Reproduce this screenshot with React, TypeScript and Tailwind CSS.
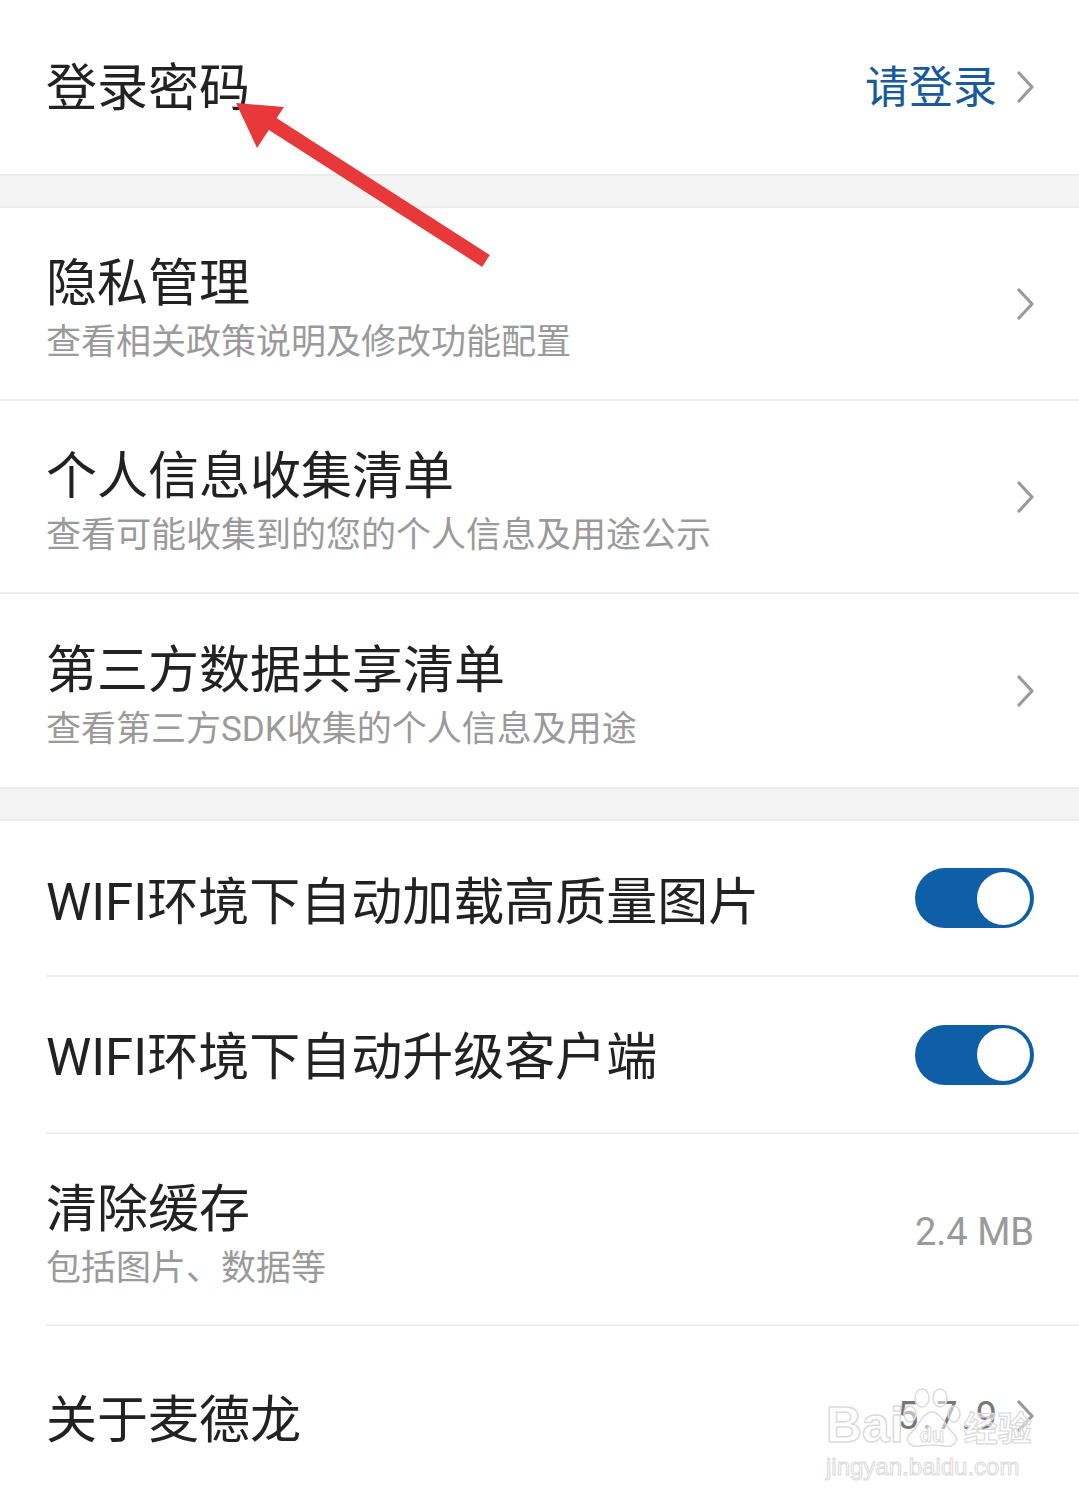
import React from "react";

const font = { fontFamily: 'Roboto, "Noto Sans CJK SC", "Noto Sans", sans-serif' };

function Chevron() {
  return (
    <svg width="18" height="32" viewBox="0 0 18 32" className="shrink-0">
      <path d="M2 2 L15 16 L2 30" fill="none" stroke="#9a9a9a" strokeWidth="3.2" strokeLinecap="round" strokeLinejoin="round" />
    </svg>
  );
}

function Toggle() {
  return (
    <div className="w-[119px] h-[60px] rounded-full bg-[#0e5ea8] flex items-center justify-end pr-[4px]">
      <div className="w-[53px] h-[53px] rounded-full bg-white" />
    </div>
  );
}

function Band() {
  return <div className="h-[34px] bg-[#f4f4f4] border-t-2 border-b-2 border-[#ececec]" />;
}

function TwoLineRow({ title, sub, last }: { title: string; sub: string; last?: boolean }) {
  return (
    <div className={`h-[193px] flex items-center justify-between pl-[46px] pr-[44px] ${last ? "" : "border-b-2 border-[#efefef]"}`}>
      <div className="flex flex-col mt-[12px]">
        <div className="text-[51px] leading-[60px] text-[#222]">{title}</div>
        <div className="text-[35px] leading-[44px] mt-[7px] text-[#9a9a9a]">{sub}</div>
      </div>
      <Chevron />
    </div>
  );
}

function Watermark() {
  return (
    <div className="absolute left-[826px] top-[1394px] pointer-events-none flex flex-col items-start">
      <div className="flex items-end h-[56px]">
        <span className="text-[50px] leading-[50px] text-white/50 [-webkit-text-stroke:1.5px_#dadada] font-bold" style={{ fontFamily: '"Liberation Sans", sans-serif' }}>Bai</span>
        <svg width="64" height="62" viewBox="0 0 64 62" className="-ml-[2px]">
          <g fill="rgba(255,255,255,0.5)" stroke="#dadada" strokeWidth="1.5">
            <ellipse cx="20" cy="10" rx="7" ry="9" />
            <ellipse cx="38" cy="10" rx="7" ry="9" />
            <ellipse cx="8" cy="26" rx="6" ry="8" />
            <ellipse cx="52" cy="26" rx="6" ry="8" />
            <path d="M30 24 C20 24 16 40 8 46 C2 52 8 60 18 58 C24 57 36 57 42 58 C52 60 58 52 52 46 C44 40 40 24 30 24 Z" />
          </g>
          <text x="30" y="54" textAnchor="middle" fontSize="20" fontFamily="Liberation Sans, sans-serif" fontWeight="bold" fill="#fff" stroke="#dadada" strokeWidth="1">du</text>
        </svg>
        <span className="text-[34px] leading-[46px] text-white/50 [-webkit-text-stroke:1.2px_#dadada] font-bold -ml-[2px]" style={{ fontFamily: '"Noto Sans CJK SC", sans-serif' }}>经验</span>
      </div>
      <div className="text-[24px] leading-[30px] text-white/50 [-webkit-text-stroke:1px_#dadada] mt-[2px]" style={{ fontFamily: '"Liberation Sans", sans-serif' }}>jingyan.baidu.com</div>
    </div>
  );
}

function Arrow() {
  return (
    <svg className="absolute left-0 top-0 pointer-events-none" width="1079" height="300" viewBox="0 0 1079 300">
      <line x1="486" y1="261" x2="268" y2="121" stroke="#e8393a" strokeWidth="14" />
      <polygon points="236,103 284,107 257,148" fill="#e8393a" />
    </svg>
  );
}

export default function App() {
  return (
    <div className="relative w-[1079px] h-[1503px] overflow-hidden bg-white" style={font}>
      <div className="h-[174px] flex items-center justify-between pl-[46px] pr-[44px]">
        <div className="text-[51px] leading-[60px] text-[#222] mt-[4px]">登录密码</div>
        <div className="flex items-center gap-[20px]">
          <span className="text-[44px] leading-[56px] text-[#185a9b] mt-[2px]">请登录</span>
          <Chevron />
        </div>
      </div>
      <Band />
      <TwoLineRow title="隐私管理" sub="查看相关政策说明及修改功能配置" />
      <TwoLineRow title="个人信息收集清单" sub="查看可能收集到的您的个人信息及用途公示" />
      <TwoLineRow title="第三方数据共享清单" sub="查看第三方SDK收集的个人信息及用途" last />
      <Band />
      <div className="pl-[46px]">
        <div className="h-[156px] flex items-center justify-between pr-[45px] border-b-2 border-[#efefef]">
          <div className="text-[51px] leading-[60px] text-[#222] mt-[10px]">WIFI环境下自动加载高质量图片</div>
          <Toggle />
        </div>
        <div className="h-[157px] flex items-center justify-between pr-[45px] border-b-2 border-[#efefef]">
          <div className="text-[51px] leading-[60px] text-[#222] mt-[6px]">WIFI环境下自动升级客户端</div>
          <Toggle />
        </div>
        <div className="h-[192px] flex items-center justify-between pr-[45px] border-b-2 border-[#efefef]">
          <div className="flex flex-col mt-[12px]">
            <div className="text-[51px] leading-[60px] text-[#222]">清除缓存</div>
            <div className="text-[35px] leading-[44px] mt-[7px] text-[#9a9a9a]">包括图片、数据等</div>
          </div>
          <span className="text-[38px] leading-[44px] text-[#9a9a9a] mt-[6px]">2.4 MB</span>
        </div>
        <div className="h-[180px] flex items-center justify-between pr-[44px]">
          <div className="text-[51px] leading-[60px] text-[#222] mt-[10px]">关于麦德龙</div>
          <div className="flex items-center gap-[16px]">
            <span className="text-[38px] leading-[46px] text-[#777] tracking-[4px]">5.7.9</span>
            <Chevron />
          </div>
        </div>
      </div>
      <Arrow />
      <Watermark />
    </div>
  );
}
